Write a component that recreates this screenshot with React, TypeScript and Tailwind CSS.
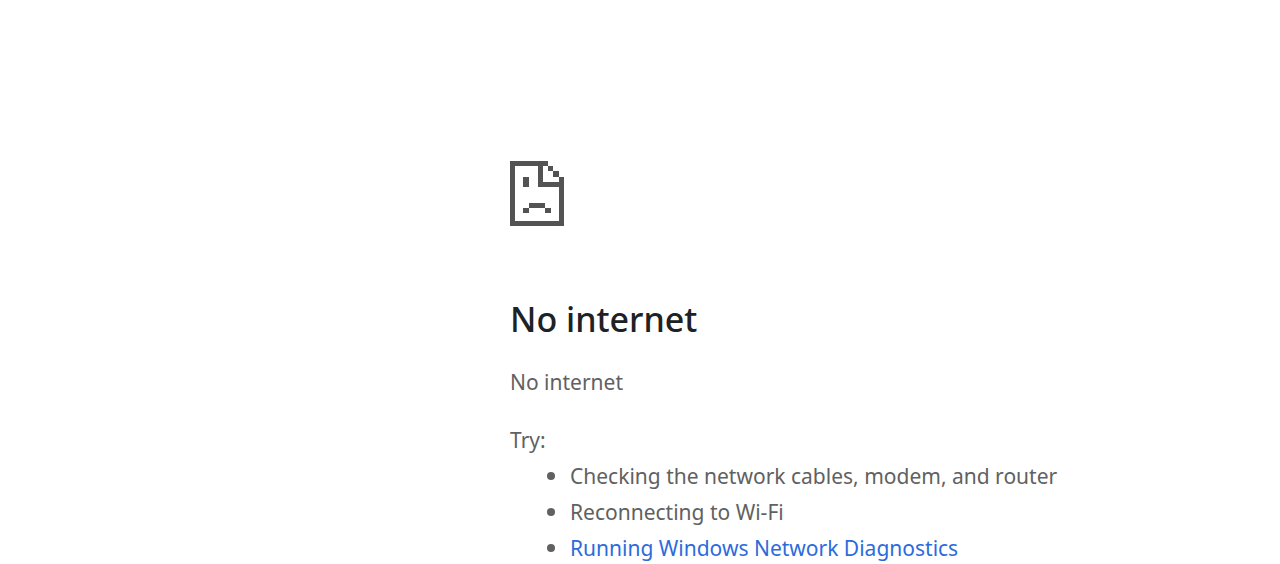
function SadPageIcon() {
  return (
    <svg
      aria-hidden="true"
      width="54"
      height="65"
      viewBox="0 0 54 65"
      fill="#535353"
      shapeRendering="crispEdges"
    >
      <path d="M0 0H38V5H33V21H49V16H54V65H0ZM5 5V60H49V26H28V5Z" fillRule="evenodd" />
      <path d="M38 5h5v5h-5zM43 10h6v6h-6zM13 16h6v10h-6z" />
      <path d="M19 42h16v5h-16zM13 47h6v5h-6zM35 47h6v5h-6z" />
    </svg>
  );
}

export default function App() {
  return (
    <main className="min-h-screen bg-white pt-[161px] pr-6 pl-[510px] font-['Noto_Sans','Open_Sans',sans-serif] text-[21px] leading-9 text-[#616161]">
      <SadPageIcon />
      <h1 className="mt-[72px] text-[34px] leading-[42px] font-medium text-[#202124]">
        No internet
      </h1>
      <p className="mt-6">No internet</p>
      <p className="mt-[22px]">Try:</p>
      <ul className="list-disc pl-[60px] leading-[35px] marker:text-[23px]">
        <li>Checking the network cables, modem, and router</li>
        <li>Reconnecting to Wi-Fi</li>
        <li>
          <a href="#diagnostics" className="text-[#2b6bdc]">
            Running Windows Network Diagnostics
          </a>
        </li>
      </ul>
    </main>
  );
}
